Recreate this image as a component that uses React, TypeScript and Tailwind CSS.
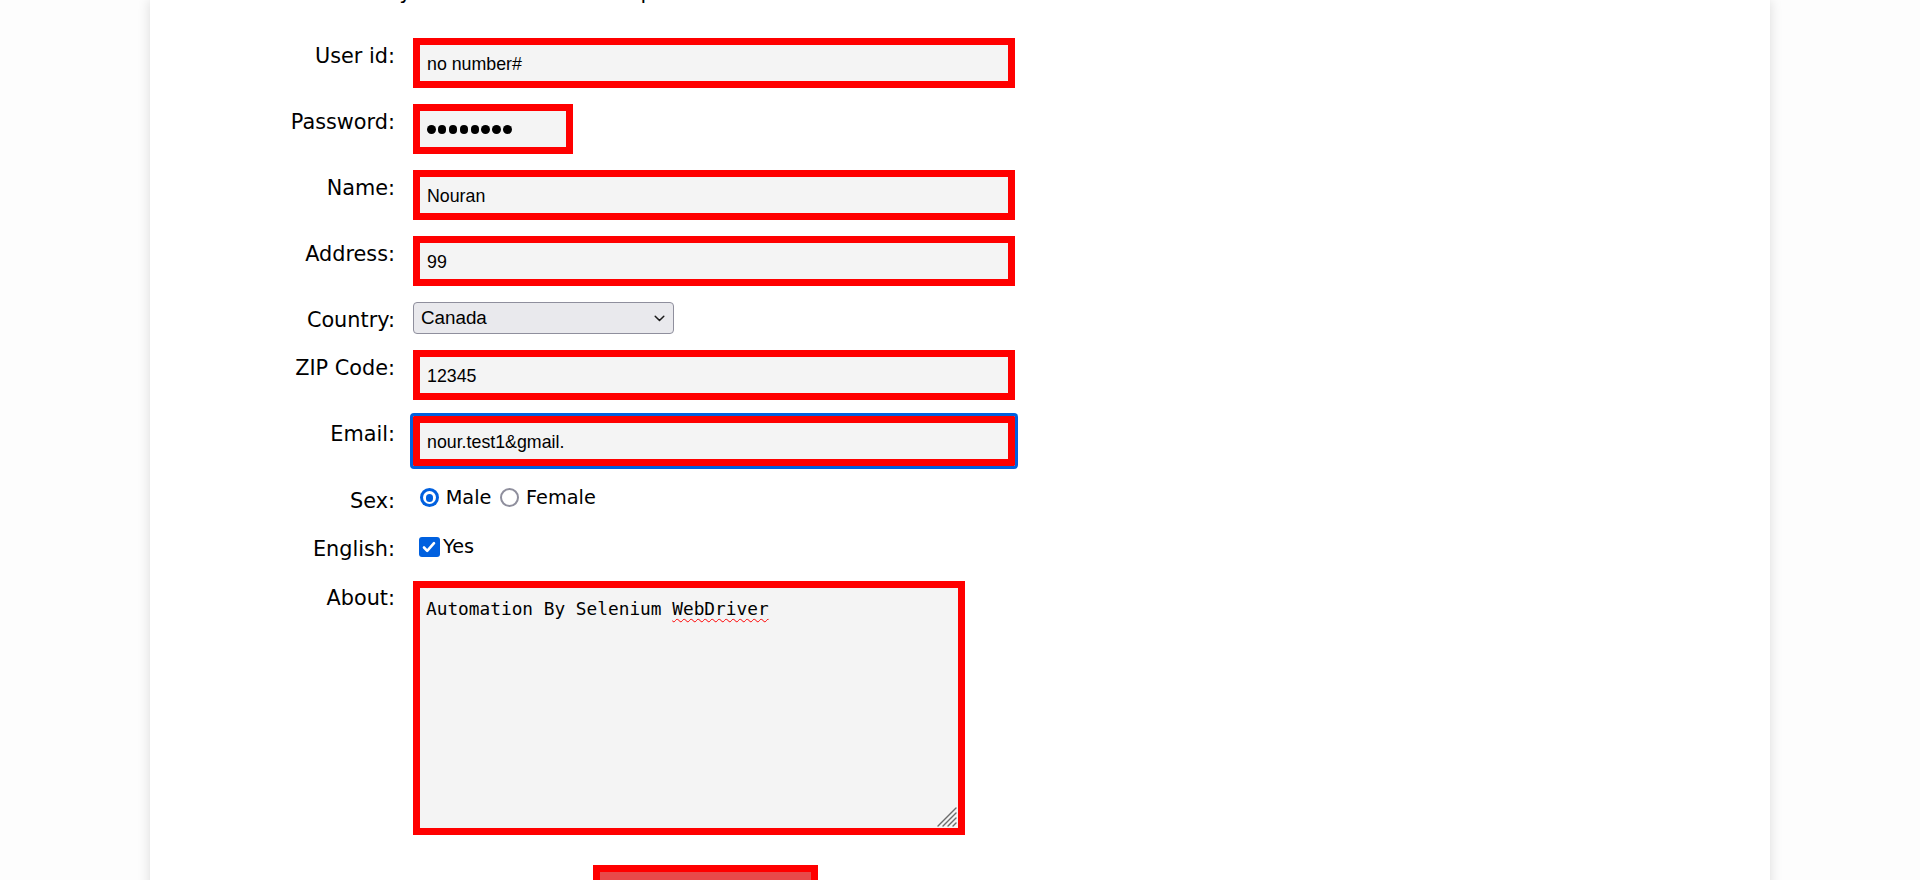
import React from "react";

const labelCls =
  "w-[106px] shrink-0 text-right text-[20.8px] leading-[24px] text-black font-['DejaVu_Sans',sans-serif]";

function Row({
  label,
  mt,
  labelPt = "pt-[6px]",
  children,
}: {
  label: string;
  mt: string;
  labelPt?: string;
  children: React.ReactNode;
}) {
  return (
    <div className={`flex items-start ${mt}`}>
      <label className={`${labelCls} ${labelPt}`}>{label}</label>
      <div className="ml-[18px]">{children}</div>
    </div>
  );
}

function TextBox({ value, extra = "" }: { value: string; extra?: string }) {
  return (
    <input
      readOnly
      value={value}
      className={`block h-[50px] w-[602px] border-[7px] border-solid border-[#ff0000] bg-[#f4f4f4] px-[7px] pt-[3px] text-[17.8px] text-black outline-none font-['Liberation_Sans',Arial,sans-serif] ${extra}`}
    />
  );
}

export default function App() {
  return (
    <div className="h-[880px] w-full overflow-hidden bg-[#fdfdfd]">
      <div className="ml-[150px] flex h-[900px] w-[1620px] flex-col bg-white pl-[139px] shadow-[0_0_12px_rgba(0,0,0,0.14)]">
        <p className="-mt-[20px] text-[20.8px] leading-[24px] text-black font-['DejaVu_Sans',sans-serif]">
          Use tab keys to move from one input field to the next.
        </p>

        <form className="flex flex-col" onSubmit={(e) => e.preventDefault()}>
          <Row label="User id:" mt="mt-[33.5px]">
            <TextBox value="no number#" />
          </Row>

          <Row label="Password:" mt="mt-[16px]">
            <div className="flex h-[50px] w-[160px] items-center gap-[2.4px] border-[7px] border-solid border-[#ff0000] bg-[#f4f4f4] pl-[7px] pt-[2px]">
              {Array.from({ length: 8 }).map((_, i) => (
                <span key={i} className="block h-[8.5px] w-[8.5px] rounded-full bg-black" />
              ))}
            </div>
          </Row>

          <Row label="Name:" mt="mt-[16px]">
            <TextBox value="Nouran" />
          </Row>

          <Row label="Address:" mt="mt-[16px]">
            <TextBox value="99" />
          </Row>

          <Row label="Country:" mt="mt-[16.5px]">
            <div className="flex h-[32px] w-[261px] items-center justify-between rounded-[4px] border-[1.3px] border-solid border-[#8f8f9d] bg-[#e9e9ed] pl-[7px] pr-[8px] text-[18.8px] text-black font-['Liberation_Sans',Arial,sans-serif]">
              <span>Canada</span>
              <svg width="11" height="7" viewBox="0 0 11 7" fill="none">
                <path d="M1.2 1.2l4.3 4.3 4.3-4.3" stroke="#1b1b1b" strokeWidth="1.5" strokeLinecap="round" strokeLinejoin="round" />
              </svg>
            </div>
          </Row>

          <Row label="ZIP Code:" mt="mt-[16px]">
            <TextBox value="12345" />
          </Row>

          <Row label="Email:" mt="mt-[16px]">
            <TextBox value="nour.test1&gmail." extra="outline-[3px] outline-solid outline-[#0060df] rounded-[1px]" />
          </Row>

          <Row label="Sex:" mt="mt-[16.5px]">
            <div className="mt-[5.3px] flex items-center text-[19.3px] leading-[20px] text-black font-['DejaVu_Sans',sans-serif]">
              <span className="ml-[7px] flex h-[18.7px] w-[18.7px] items-center justify-center rounded-full bg-[#0060df]">
                <span className="flex h-[13px] w-[13px] items-center justify-center rounded-full bg-white">
                  <span className="block h-[7.5px] w-[7.5px] rounded-full bg-[#0060df]" />
                </span>
              </span>
              <span className="ml-[7px]">Male</span>
              <span className="ml-[9px] block h-[18.7px] w-[18.7px] rounded-full border-[2.7px] border-solid border-[#8f8f9d] bg-white" />
              <span className="ml-[7px]">Female</span>
            </div>
          </Row>

          <Row label="English:" mt="mt-[18.7px]">
            <div className="mt-[5.7px] flex items-center text-[19.3px] leading-[20px] text-black font-['DejaVu_Sans',sans-serif]">
              <span className="ml-[6px] flex h-[20px] w-[20.7px] items-center justify-center rounded-[3px] bg-[#0060df]">
                <svg width="14" height="12" viewBox="0 0 14 12" fill="none">
                  <path d="M2 6.5l3.2 3.3L12 2.2" stroke="white" strokeWidth="2.6" strokeLinecap="round" strokeLinejoin="round" />
                </svg>
              </span>
              <span className="ml-[3.3px]">Yes</span>
            </div>
          </Row>

          <Row label="About:" mt="mt-[19.8px]" labelPt="pt-[5px]">
            <div className="relative h-[254px] w-[552px] border-[7px] border-solid border-[#ff0000] bg-[#f4f4f4] pl-[6px] pt-[10.5px] text-[17.8px] leading-[21px] text-black font-['DejaVu_Sans_Mono',monospace]">
              Automation By Selenium{" "}
              <span className="underline decoration-wavy decoration-[#ff0000] decoration-[1px] underline-offset-[3px]">
                WebDriver
              </span>
              <svg
                className="absolute bottom-[1px] right-[1px]"
                width="22"
                height="22"
                viewBox="0 0 22 22"
                fill="none"
              >
                <path
                  d="M21 3L3 21M21 8L8 21M21 13L13 21M21 18L18 21"
                  stroke="#6b6b6b"
                  strokeWidth="1.4"
                  strokeLinecap="round"
                />
              </svg>
            </div>
          </Row>

          <div className="ml-[304px] mt-[30.3px]">
            <button
              type="submit"
              className="block h-[60px] w-[225px] border-[7px] border-solid border-[#ff0000] bg-[#e84a4a] text-white"
            />
          </div>
        </form>
      </div>
    </div>
  );
}
